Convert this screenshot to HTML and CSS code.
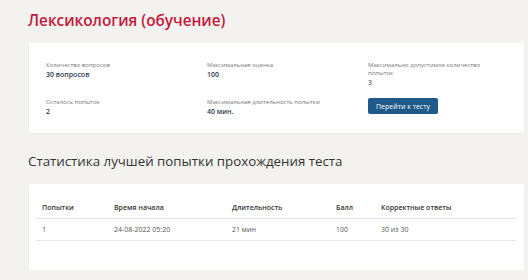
FILE: index.html
```html
<!DOCTYPE html>
<html>

<head>
    <title>Лексикология (обучение)</title>
    <meta name="viewport" content="width=device-width, initial-scale=1">
    <link rel="stylesheet" href="styles.css">
</head>

<body>
    <div class="page">
        <h1 class="course-title">Лексикология (обучение)</h1>

        <div class="card info-card">
            <div class="info-item">
                <div class="info-label">Количество вопросов</div>
                <div class="info-value">30 вопросов</div>
            </div>
            <div class="info-item">
                <div class="info-label">Максимальная оценка</div>
                <div class="info-value">100</div>
            </div>
            <div class="info-item">
                <div class="info-label">Максимально допустимое количество<br>попыток</div>
                <div class="info-value plain">3</div>
            </div>
            <div class="info-item">
                <div class="info-label">Осталось попыток</div>
                <div class="info-value">2</div>
            </div>
            <div class="info-item">
                <div class="info-label">Максимальная длительность попытки</div>
                <div class="info-value">40 мин.</div>
            </div>
            <div class="info-item">
                <button class="start-button">Перейти к тесту</button>
            </div>
        </div>

        <h2 class="section-title">Статистика лучшей попытки прохождения теста</h2>

        <div class="card stats-card">
            <table class="stats-table">
                <thead>
                    <tr>
                        <th class="col-try">Попытки</th>
                        <th class="col-start">Время начала</th>
                        <th class="col-duration">Длительность</th>
                        <th class="col-score">Балл</th>
                        <th>Корректные ответы</th>
                    </tr>
                </thead>
                <tbody>
                    <tr>
                        <td>1</td>
                        <td>24-08-2022 05:20</td>
                        <td>21 мин</td>
                        <td>100</td>
                        <td>30 из 30</td>
                    </tr>
                </tbody>
            </table>
        </div>
    </div>
</body>

</html>
```

FILE: styles.css
```css
body {
    font-family: "Open Sans", Arial, sans-serif;
    margin: 0;
    padding: 0;
    background-color: #f3f2ef;
    color: #333;
}

.page {
    padding: 8px 4px 0 29px;
}

.course-title {
    margin: 0 0 11px -1px;
    font-size: 15.3px;
    line-height: 24px;
    font-weight: 600;
    color: #c3193d;
}

.card {
    background-color: #fff;
    box-shadow: 0px 1px 2px rgba(0, 0, 0, 0.05);
}

/* Info card */

.info-card {
    display: grid;
    grid-template-columns: repeat(3, 161px);
    row-gap: 10px;
    padding: 18px 17px 16px 17px;
}

.info-label {
    font-size: 6px;
    line-height: 8px;
    color: #777;
}

.info-value {
    font-size: 7px;
    line-height: 11px;
    font-weight: 600;
    color: #2d3b4e;
}

.info-value.plain {
    font-weight: 400;
    color: #333;
}

.start-button {
    display: block;
    width: 70px;
    height: 16px;
    padding: 0;
    border: none;
    border-radius: 2px;
    background-color: #1f5a8a;
    color: #fff;
    font-family: "Open Sans", Arial, sans-serif;
    font-size: 7px;
    cursor: pointer;
}

/* Stats */

.section-title {
    margin: 18px 0 13px -1px;
    font-size: 13.3px;
    line-height: 20px;
    font-weight: 400;
    color: #333;
}

.stats-card {
    padding: 13px 8px 29px 7px;
}

.stats-table {
    width: 100%;
    border-collapse: collapse;
    font-size: 7px;
}

.stats-table th,
.stats-table td {
    text-align: left;
    padding: 0 0 0 6px;
    height: 21px;
    border-bottom: 1px solid #e6e6e6;
}

.stats-table th {
    font-weight: 600;
    color: #333;
}

.stats-table td {
    color: #555;
}

.col-try {
    width: 66px;
}

.col-start {
    width: 112px;
}

.col-duration {
    width: 98px;
}

.col-score {
    width: 39px;
}
```
